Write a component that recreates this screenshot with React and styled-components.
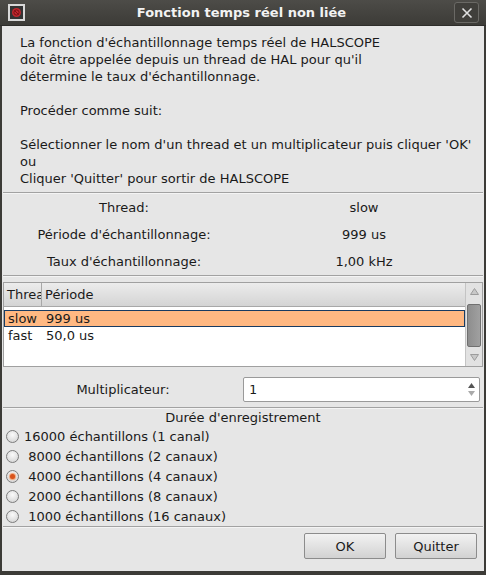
import React from "react";
import styled, { createGlobalStyle } from "styled-components";

const Global = createGlobalStyle`
  html, body { margin: 0; padding: 0; background: #2b2b2b; }
  * { box-sizing: border-box; }
`;

const Window = styled.div`
  width: 486px;
  height: 575px;
  display: flex;
  flex-direction: column;
  background: #3c3b37;
  font-family: "DejaVu Sans", "Liberation Sans", sans-serif;
  font-size: 13px;
  color: #1a1a1a;
  overflow: hidden;
`;

const TitleBar = styled.div`
  height: 26px;
  flex: none;
  display: flex;
  align-items: center;
  padding: 0 7px 0 8px;
  background: linear-gradient(#4d4c48, #3c3b37);
  border-bottom: 1px solid #2e2d2a;
`;

const Title = styled.div`
  flex: 1;
  text-align: center;
  color: #f2f2f2;
  font-weight: bold;
  font-size: 13px;
  padding-left: 4px;
`;

const CloseLeft = styled.div`
  width: 17px;
  height: 17px;
  border: 2px solid #d8d8d8;
  background: #333;
  display: flex;
  align-items: center;
  justify-content: center;
`;

const CloseRight = styled.div`
  width: 25px;
  height: 21px;
  border: 1px solid #6a6965;
  border-radius: 3px;
  display: flex;
  align-items: center;
  justify-content: center;
  background: #403f3b;
`;

const Body = styled.div`
  flex: 1;
  margin: 0 2px 4px 2px;
  background: #e6e6e6;
  display: flex;
  flex-direction: column;
  padding: 8px 1px 0 1px;
`;

const Message = styled.div`
  padding-left: 17px;
  line-height: 17px;
  white-space: pre;
  height: 158px;
`;

const Separator = styled.div`
  height: 2px;
  flex: none;
  border-top: 1px solid #a2a2a2;
  border-bottom: 1px solid #f4f4f4;
`;

const InfoGrid = styled.div`
  display: grid;
  grid-template-columns: 242px 1fr;
  grid-auto-rows: 27px;
  align-items: center;
  text-align: center;
`;

const Table = styled.div`
  margin: 5px 0 0 0;
  height: 85px;
  flex: none;
  display: flex;
  border: 1px solid #a0a0a0;
  background: #fff;
`;

const TableMain = styled.div`
  flex: 1;
  display: flex;
  flex-direction: column;
`;

const Header = styled.div`
  height: 24px;
  display: flex;
  background: linear-gradient(#ececec, #d4d4d4);
  border-bottom: 1px solid #a8a8a8;
`;

const HeaderCell = styled.div`
  width: ${(p) => p.$w || "auto"};
  flex: ${(p) => (p.$w ? "none" : 1)};
  overflow: hidden;
  white-space: nowrap;
  padding-left: 3px;
  display: flex;
  align-items: center;
  border-right: ${(p) => (p.$w ? "1px solid #a8a8a8" : "none")};
`;

const Rows = styled.div`
  padding-top: 3px;
`;

const Row = styled.div`
  height: 17px;
  display: flex;
  align-items: center;
  background: ${(p) => (p.$sel ? "#ffb882" : "transparent")};
  border: 1px solid ${(p) => (p.$sel ? "#183b62" : "transparent")};
`;

const Cell = styled.div`
  width: ${(p) => p.$w || "auto"};
  padding-left: 3px;
  white-space: nowrap;
`;

const Scrollbar = styled.div`
  width: 17px;
  flex: none;
  display: flex;
  flex-direction: column;
  background: #e2e2e2;
  border-left: 1px solid #c4c4c4;
`;

const Arrow = styled.div`
  height: 17px;
  display: flex;
  align-items: center;
  justify-content: center;
`;

const Trough = styled.div`
  flex: 1;
  padding: 4px 1px 2px 1px;
  display: flex;
`;

const Thumb = styled.div`
  width: 100%;
  height: 43px;
  background: linear-gradient(90deg, #8e8e8e, #a0a0a0);
  border: 1px solid #707070;
  border-radius: 2px;
`;

const MultRow = styled.div`
  display: grid;
  grid-template-columns: 240px 1fr;
  align-items: center;
  height: 40px;
  padding-top: 5px;
  flex: none;
`;

const Label = styled.div`
  text-align: center;
`;

const SpinBox = styled.div`
  height: 25px;
  margin-right: 3px;
  display: flex;
  background: #fff;
  border: 1px solid #9a9a9a;
  border-radius: 2px;
`;

const SpinValue = styled.div`
  flex: 1;
  padding-left: 5px;
  display: flex;
  align-items: center;
  font-family: "DejaVu Sans Mono", "Liberation Mono", monospace;
  font-size: 13px;
`;

const SpinArrows = styled.div`
  width: 16px;
  display: flex;
  flex-direction: column;
  align-items: center;
  justify-content: center;
  gap: 3px;
`;

const GroupTitle = styled.div`
  text-align: center;
  height: 17px;
  line-height: 18px;
  flex: none;
`;

const RadioList = styled.div`
  display: flex;
  flex-direction: column;
  padding-left: 3px;
`;

const RadioRow = styled.div`
  height: 20px;
  display: flex;
  align-items: center;
  gap: 5px;
  white-space: pre;
`;

const RadioDot = styled.div`
  width: 13px;
  height: 13px;
  border-radius: 50%;
  border: 1px solid #7c7c7c;
  background: radial-gradient(circle at 50% 35%, #fafafa, #cfcfcf);
  display: flex;
  align-items: center;
  justify-content: center;
  &::after {
    content: "";
    display: ${(p) => (p.$on ? "block" : "none")};
    width: 5px;
    height: 5px;
    border-radius: 50%;
    background: #d8531c;
    box-shadow: 0 0 1px 1px #f0a070;
  }
`;

const ButtonBar = styled.div`
  display: flex;
  justify-content: flex-end;
  gap: 9px;
  padding: 5px 6px 0 0;
`;

const Button = styled.button`
  width: 82px;
  height: 26px;
  font-family: "DejaVu Sans", "Liberation Sans", sans-serif;
  font-size: 13px;
  color: #1a1a1a;
  border: 1px solid #8c8c8c;
  border-radius: 2px;
  background: linear-gradient(#f2f2f2, #d2d2d2);
  padding: 0;
`;

const radios = [
  ["16000 échantillons (1 canal)", false],
  [" 8000 échantillons (2 canaux)", false],
  [" 4000 échantillons (4 canaux)", true],
  [" 2000 échantillons (8 canaux)", false],
  [" 1000 échantillons (16 canaux)", false],
];

export default function App() {
  return (
    <>
      <Global />
      <Window>
        <TitleBar>
          <CloseLeft>
            <svg width="11" height="11" viewBox="0 0 11 11">
              <circle cx="5.5" cy="5.5" r="4.5" fill="#c0272d" />
              <circle cx="5.5" cy="5.5" r="2.6" fill="none" stroke="#7a1014" strokeWidth="1" />
              <line x1="3.5" y1="3.5" x2="7.5" y2="7.5" stroke="#7a1014" strokeWidth="1" />
            </svg>
          </CloseLeft>
          <Title>Fonction temps réel non liée</Title>
          <CloseRight>
            <svg width="12" height="12" viewBox="0 0 12 12">
              <path d="M1.5 1.5 L10.5 10.5 M10.5 1.5 L1.5 10.5" stroke="#e0e0e0" strokeWidth="1.6" />
            </svg>
          </CloseRight>
        </TitleBar>
        <Body>
          <Message>
            {`La fonction d'échantillonnage temps réel de HALSCOPE
doit être appelée depuis un thread de HAL pour qu'il
détermine le taux d'échantillonnage.

Procéder comme suit:

Sélectionner le nom d'un thread et un multiplicateur puis cliquer 'OK'
ou
Cliquer 'Quitter' pour sortir de HALSCOPE`}
          </Message>
          <Separator />
          <InfoGrid>
            <div>Thread:</div>
            <div>slow</div>
            <div>Période d'échantillonnage:</div>
            <div>999 us</div>
            <div>Taux d'échantillonnage:</div>
            <div>1,00 kHz</div>
          </InfoGrid>
          <Separator />
          <Table>
            <TableMain>
              <Header>
                <HeaderCell $w="38px">Thread</HeaderCell>
                <HeaderCell>Période</HeaderCell>
              </Header>
              <Rows>
                <Row $sel>
                  <Cell $w="38px">slow</Cell>
                  <Cell>999 us</Cell>
                </Row>
                <Row>
                  <Cell $w="38px">fast</Cell>
                  <Cell>50,0 us</Cell>
                </Row>
              </Rows>
            </TableMain>
            <Scrollbar>
              <Arrow>
                <svg width="9" height="7" viewBox="0 0 9 7">
                  <path d="M4.5 0.5 L8.5 6.5 L0.5 6.5 Z" fill="#c8c8c8" stroke="#9c9c9c" />
                </svg>
              </Arrow>
              <Trough>
                <Thumb />
              </Trough>
              <Arrow>
                <svg width="9" height="7" viewBox="0 0 9 7">
                  <path d="M0.5 0.5 L8.5 0.5 L4.5 6.5 Z" fill="#c8c8c8" stroke="#9c9c9c" />
                </svg>
              </Arrow>
            </Scrollbar>
          </Table>
          <MultRow>
            <Label>Multiplicateur:</Label>
            <SpinBox>
              <SpinValue>1</SpinValue>
              <SpinArrows>
                <svg width="7" height="5" viewBox="0 0 7 5">
                  <path d="M3.5 0 L7 5 L0 5 Z" fill="#555" />
                </svg>
                <svg width="7" height="5" viewBox="0 0 7 5">
                  <path d="M0 0 L7 0 L3.5 5 Z" fill="#aaa" />
                </svg>
              </SpinArrows>
            </SpinBox>
          </MultRow>
          <Separator />
          <GroupTitle>Durée d'enregistrement</GroupTitle>
          <RadioList>
            {radios.map(([t, on]) => (
              <RadioRow key={t}>
                <RadioDot $on={on} />
                <span>{t}</span>
              </RadioRow>
            ))}
          </RadioList>
          <Separator />
          <ButtonBar>
            <Button>OK</Button>
            <Button>Quitter</Button>
          </ButtonBar>
        </Body>
      </Window>
    </>
  );
}
